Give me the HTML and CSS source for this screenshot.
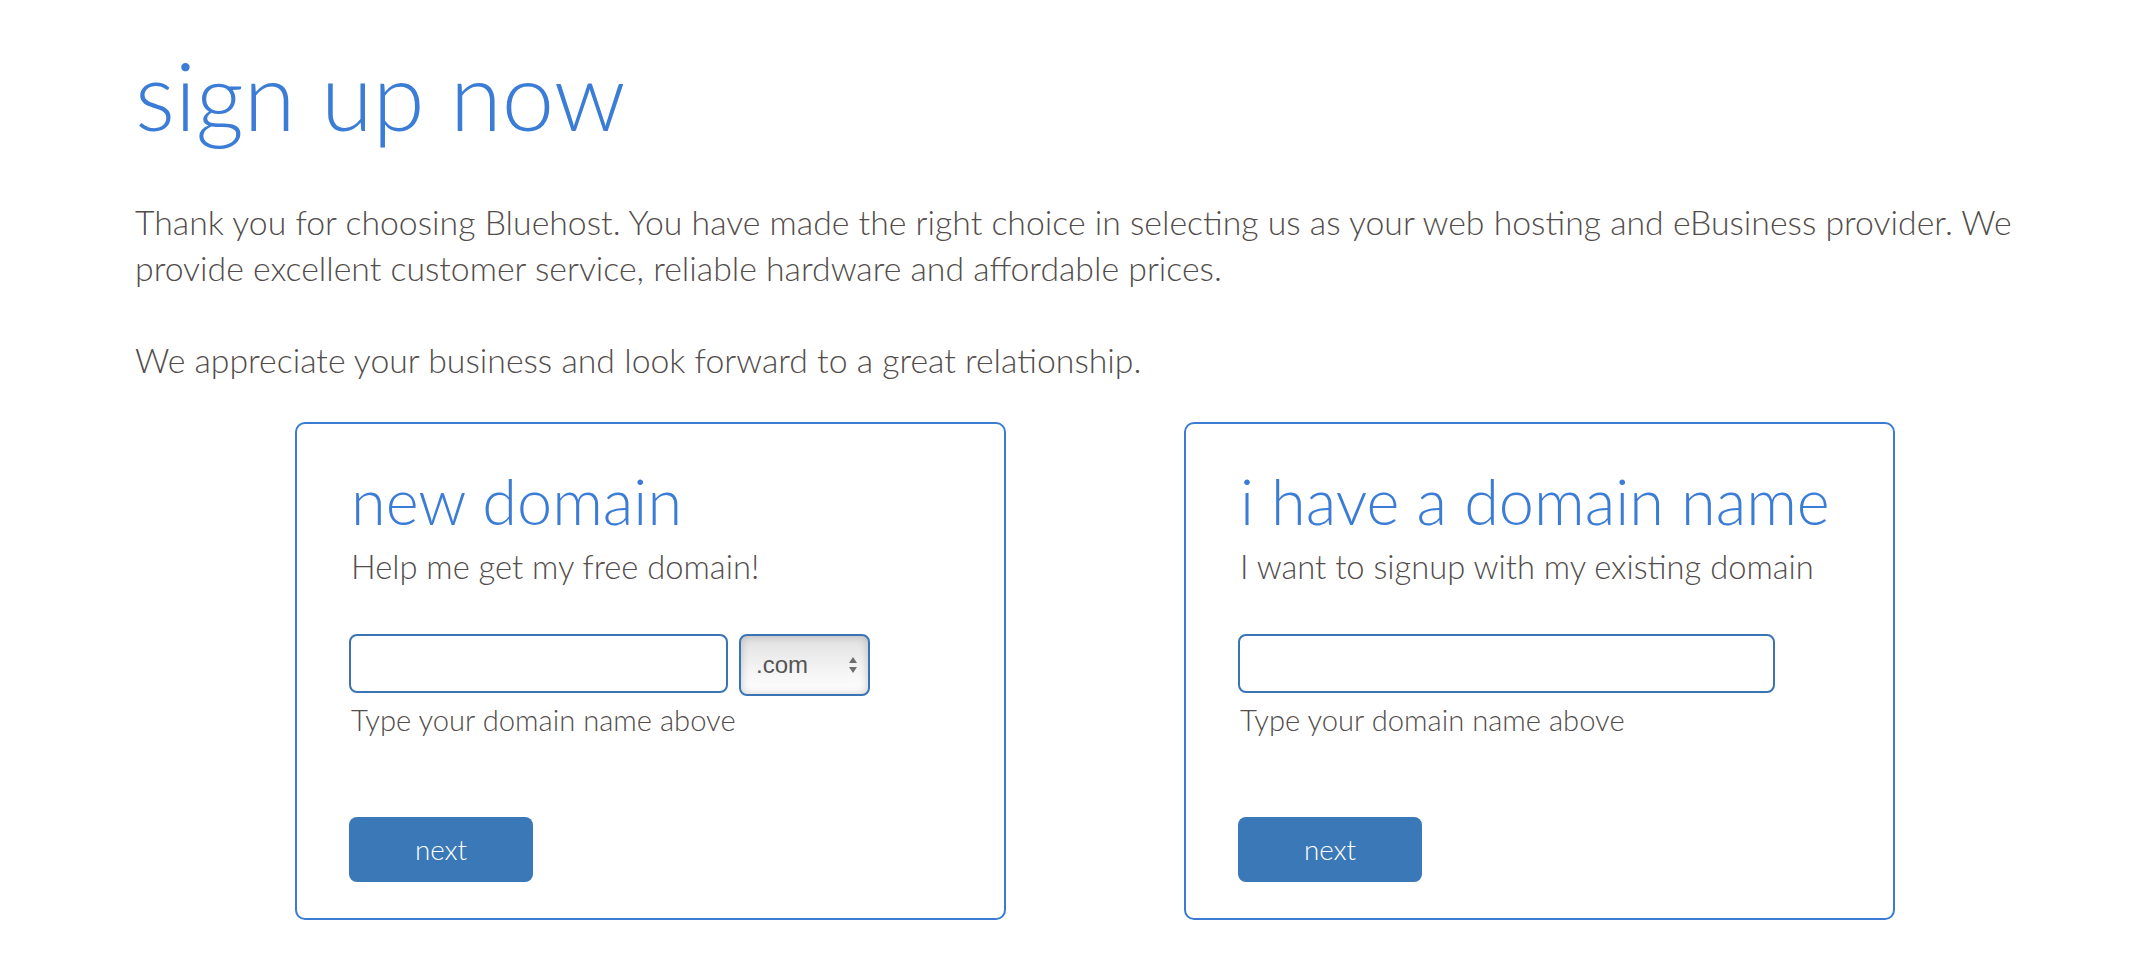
FILE: index.html
```html
<!DOCTYPE html>
<html lang="en">
<head>
<meta charset="utf-8">
<title>sign up now</title>
<link rel="stylesheet" href="styles.css">
</head>
<body>
<main class="page">
  <h1 class="title">sign up now</h1>
  <p class="intro">Thank you for choosing Bluehost. You have made the right choice in selecting us as your web hosting and eBusiness provider. We provide excellent customer service, reliable hardware and affordable prices.</p>
  <p class="intro">We appreciate your business and look forward to a great relationship.</p>

  <div class="options">
    <section class="card">
      <h2 class="card-title">new domain</h2>
      <p class="card-sub">Help me get my free domain!</p>
      <div class="field-row">
        <input class="domain-input domain-input--short" type="text" aria-label="domain name">
        <div class="tld-select">
          <span class="tld-value">.com</span>
          <svg class="tld-arrows" width="10" height="20" viewBox="0 0 10 20" aria-hidden="true">
            <path d="M5 2 L9 8 L1 8 Z" fill="#6e6e6e"/>
            <path d="M5 18 L9 12 L1 12 Z" fill="#6e6e6e"/>
          </svg>
        </div>
      </div>
      <p class="card-hint">Type your domain name above</p>
      <button class="next-btn" type="button">next</button>
    </section>

    <section class="card">
      <h2 class="card-title">i have a domain name</h2>
      <p class="card-sub">I want to signup with my existing domain</p>
      <div class="field-row">
        <input class="domain-input domain-input--long" type="text" aria-label="existing domain name">
      </div>
      <p class="card-hint">Type your domain name above</p>
      <button class="next-btn" type="button">next</button>
    </section>
  </div>
</main>
</body>
</html>
```

FILE: styles.css
```css
html, body {
  margin: 0;
  padding: 0;
  background: #ffffff;
}

body {
  font-family: "Lato", "Open Sans", "DejaVu Sans", sans-serif;
  font-weight: 300;
  color: #524d4b;
}

.page {
  padding: 45px 0 0 135px;
}

.title {
  margin: 0;
  font-size: 94px;
  line-height: 100px;
  font-weight: 300;
  color: #3b7cd6;
}

.intro {
  margin: 54px 0 0 0;
  width: 1930px;
  font-size: 33.8px;
  line-height: 46px;
}

.intro + .intro {
  margin-top: 46px;
}

.options {
  display: flex;
  gap: 178px;
  margin: 39px 0 0 160px;
}

.card {
  box-sizing: border-box;
  width: 711px;
  height: 498px;
  border: 2px solid #3b7bd2;
  border-radius: 10px;
  padding: 42px 52px 36px 54px;
  display: flex;
  flex-direction: column;
  align-items: flex-start;
}

.card-title {
  margin: 0;
  font-size: 63px;
  line-height: 70px;
  font-weight: 300;
  color: #3b7cd6;
  white-space: nowrap;
}

.card-sub {
  margin: 11px 0 0 0;
  font-size: 32.7px;
  line-height: 40px;
  white-space: nowrap;
}

.field-row {
  margin-top: 47px;
  height: 62px;
  display: flex;
  align-items: flex-start;
  gap: 11px;
}

.domain-input {
  box-sizing: border-box;
  height: 59px;
  border: 2px solid #3a74b4;
  border-radius: 8px;
  background: #fff;
  margin: 0 0 0 -2px;
  padding: 0 12px;
  font: 22px "Liberation Sans", Arial, sans-serif;
  outline: none;
}

.domain-input--short { width: 379px; }
.domain-input--long { width: 537px; }

.tld-select {
  box-sizing: border-box;
  width: 131px;
  height: 62px;
  border: 2px solid #3a74b4;
  border-radius: 8px;
  background: linear-gradient(to bottom, #e0e0e0 0%, #f3f3f3 55%, #ffffff 100%);
  box-shadow: inset 0 0 8px rgba(0, 0, 0, 0.2);
  display: flex;
  align-items: center;
  justify-content: space-between;
  padding: 0 10px 0 15px;
}

.tld-value {
  font: 24px "Liberation Sans", Arial, sans-serif;
  color: #555;
}

.tld-arrows {
  display: block;
}

.card-hint {
  margin: 6px 0 0 0;
  font-size: 29.2px;
  line-height: 36px;
  white-space: nowrap;
}

.next-btn {
  margin-top: 79px;
  margin-left: -2px;
  width: 184px;
  height: 65px;
  border: none;
  border-radius: 8px;
  background: #3b78b7;
  color: #ffffff;
  font-family: "Lato", "Open Sans", sans-serif;
  font-weight: 300;
  font-size: 27.8px;
  padding: 0;
  cursor: pointer;
}
```
